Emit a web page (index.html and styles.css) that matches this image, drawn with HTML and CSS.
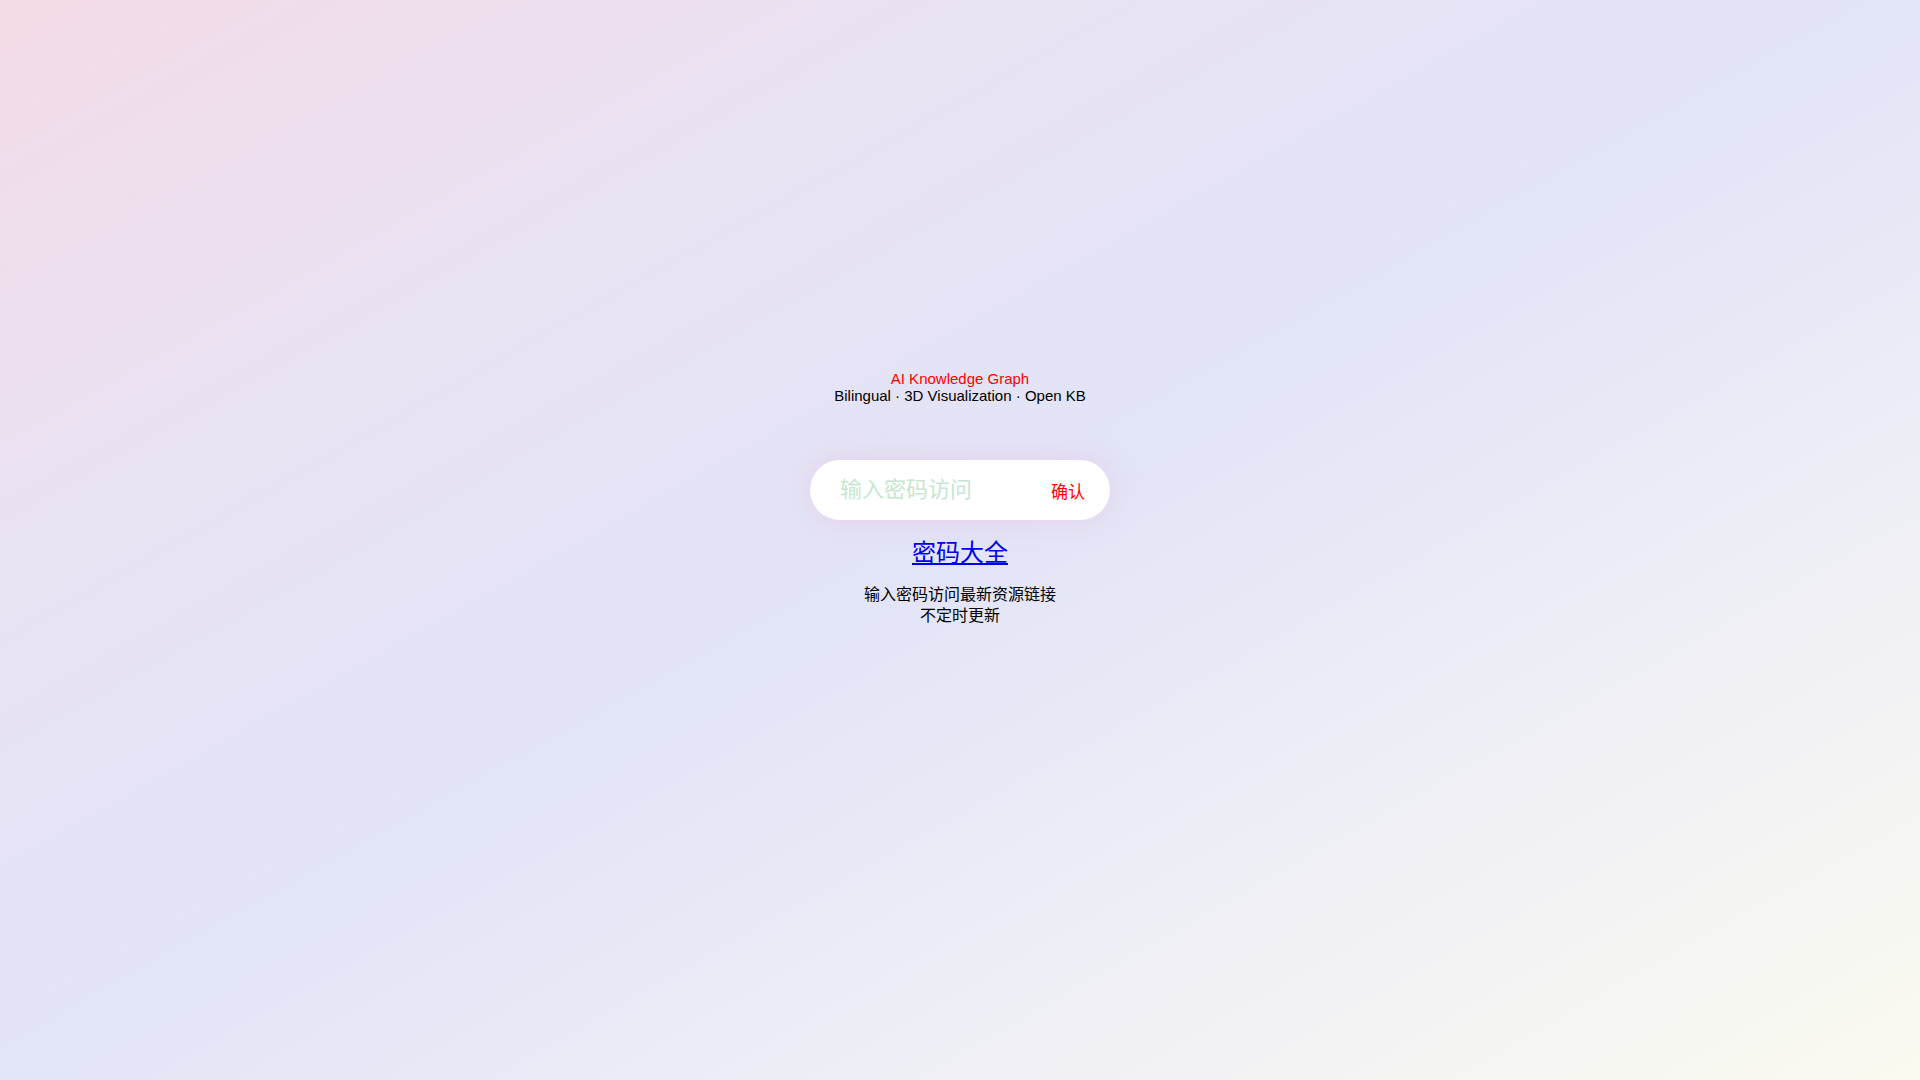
FILE: index.html
```html
<!DOCTYPE html>
<html lang="zh">
<head>
<meta charset="utf-8">
<title>AI Knowledge Graph</title>
<link rel="stylesheet" href="styles.css">
</head>
<body>
<main class="page">
  <header class="head">
    <div class="title">AI Knowledge Graph</div>
    <div class="subtitle">Bilingual · 3D Visualization · Open KB</div>
  </header>
  <form class="pill" onsubmit="return false">
    <input class="pwd" type="password" placeholder="输入密码访问">
    <button class="ok" type="submit">确认</button>
  </form>
  <a class="link" href="#">密码大全</a>
  <p class="desc">输入密码访问最新资源链接<br>不定时更新</p>
</main>
</body>
</html>
```
FILE: styles.css
```css
html, body {
  margin: 0;
  padding: 0;
  height: 100%;
}
body {
  font-family: "Liberation Sans", "Noto Sans CJK SC", sans-serif;
  background: linear-gradient(to bottom right, #f4dbe7 0%, #e9e2f3 25%, #e2e4f7 50%, #eeeef6 72%, #fafaf0 100%);
  color: #000;
}
.page {
  display: flex;
  flex-direction: column;
  align-items: center;
  padding-top: 370px;
}
.head {
  text-align: center;
  font-size: 15px;
  line-height: 17px;
}
.title { color: #ff0000; }
.subtitle { color: #000; }
.pill {
  margin-top: 56px;
  width: 300px;
  height: 60px;
  box-sizing: border-box;
  border-radius: 30px;
  background: #fff;
  box-shadow: 0 0 28px rgba(240, 170, 210, 0.35);
  display: flex;
  align-items: center;
  padding: 0 25px 0 30px;
}
.pwd {
  flex: 1;
  min-width: 0;
  border: none;
  outline: none;
  background: transparent;
  font-family: "Liberation Sans", "Noto Sans CJK SC", sans-serif;
  font-size: 22px;
  padding: 0;
  color: #333;
}
.pwd::placeholder { color: #c6e6cf; }
.ok {
  border: none;
  background: transparent;
  padding: 0;
  color: #ff0000;
  font-family: "Liberation Sans", "Noto Sans CJK SC", sans-serif;
  font-size: 17px;
  cursor: pointer;
}
.link {
  margin-top: 18px;
  font-size: 24px;
  line-height: 30px;
  color: #0000ee;
  text-decoration: underline;
}
.desc {
  margin: 16px 0 0;
  text-align: center;
  font-size: 16px;
  line-height: 21px;
}
```
